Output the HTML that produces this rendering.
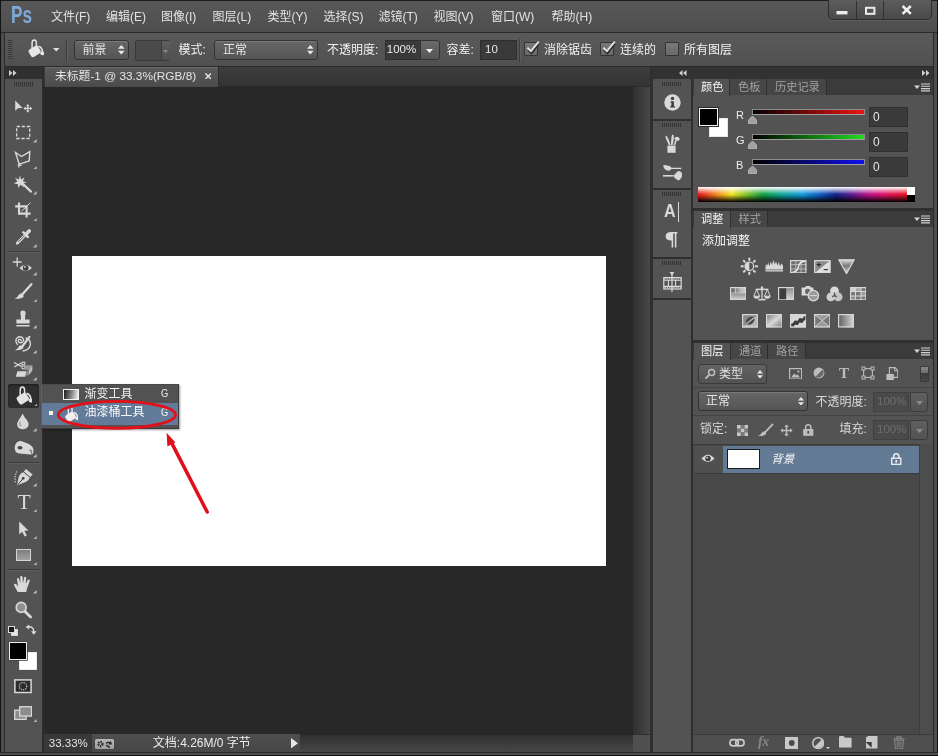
<!DOCTYPE html>
<html><head><meta charset="utf-8"><title>Photoshop</title>
<style>
html,body{margin:0;padding:0;background:#535353}
body{width:938px;height:756px;position:relative;overflow:hidden;font-family:"Liberation Sans","Noto Sans CJK SC",sans-serif}
#app{position:absolute;left:0;top:0;width:938px;height:756px;overflow:hidden;will-change:transform}
#app div,#app svg.ab{position:absolute}
.lb{white-space:nowrap;display:flex;align-items:center}
.lb span{display:inline-block}
</style></head><body><div id="app">
<div style="left:0px;top:0px;width:938px;height:756px;background:#535353"></div>
<div style="left:0px;top:0px;width:938px;height:32px;background:linear-gradient(#585858,#4e4e4e)"></div>
<div style="left:0px;top:0px;width:938px;height:1px;background:#1c1c1c"></div>
<div class="lb" style="left:11.2px;top:1.2px;height:28px;line-height:28px;font-size:23px;font-weight:bold;color:#7eaadc;letter-spacing:0px;transform:scaleX(0.745);transform-origin:0 0">Ps</div>
<div class="lb" style="left:51px;top:9.0px;height:16px;font-size:12px;line-height:16px;color:#e2e2e2;"><span>文件</span><span style="">(F)</span></div>
<div class="lb" style="left:106px;top:9.0px;height:16px;font-size:12px;line-height:16px;color:#e2e2e2;"><span>编辑</span><span style="">(E)</span></div>
<div class="lb" style="left:161px;top:9.0px;height:16px;font-size:12px;line-height:16px;color:#e2e2e2;"><span>图像</span><span style="">(I)</span></div>
<div class="lb" style="left:212.5px;top:9.0px;height:16px;font-size:12px;line-height:16px;color:#e2e2e2;"><span>图层</span><span style="">(L)</span></div>
<div class="lb" style="left:267.5px;top:9.0px;height:16px;font-size:12px;line-height:16px;color:#e2e2e2;"><span>类型</span><span style="">(Y)</span></div>
<div class="lb" style="left:323.5px;top:9.0px;height:16px;font-size:12px;line-height:16px;color:#e2e2e2;"><span>选择</span><span style="">(S)</span></div>
<div class="lb" style="left:378.5px;top:9.0px;height:16px;font-size:12px;line-height:16px;color:#e2e2e2;"><span>滤镜</span><span style="">(T)</span></div>
<div class="lb" style="left:433.5px;top:9.0px;height:16px;font-size:12px;line-height:16px;color:#e2e2e2;"><span>视图</span><span style="">(V)</span></div>
<div class="lb" style="left:491px;top:9.0px;height:16px;font-size:12px;line-height:16px;color:#e2e2e2;"><span>窗口</span><span style="">(W)</span></div>
<div class="lb" style="left:551.5px;top:9.0px;height:16px;font-size:12px;line-height:16px;color:#e2e2e2;"><span>帮助</span><span style="">(H)</span></div>
<div style="left:828px;top:0px;width:103.5px;height:19.5px;background:linear-gradient(#5c5c5c,#4a4a4a);border:1px solid #2e2e2e;border-top:none;border-radius:0 0 5px 5px;box-sizing:border-box;box-shadow:0 1px 0 #5e5e5e"></div>
<div style="left:856px;top:1px;width:1px;height:18px;background:#303030"></div>
<div style="left:883.2px;top:1px;width:1px;height:18px;background:#303030"></div>
<svg class="ab" style="left:828px;top:0px" width="104" height="20" viewBox="0 0 104 20" ><rect x="8.5" y="11" width="11" height="3.4" fill="#ececec"/><rect x="38" y="7.8" width="8.4" height="6" fill="none" stroke="#ececec" stroke-width="2"/><path d="M74.6 6L82.8 13.8M82.8 6L74.6 13.8" stroke="#f0f0f0" stroke-width="2.5"/></svg>
<div style="left:0px;top:32px;width:938px;height:1.2px;background:#2b2b2b"></div>
<div style="left:0px;top:33.2px;width:938px;height:33px;background:linear-gradient(#5a5a5a,#505050)"></div>
<div style="left:0px;top:66px;width:938px;height:1px;background:#2a2a2a"></div>
<svg class="ab" style="left:8px;top:40px" width="5" height="20" viewBox="0 0 5 20" ><rect x="0" y="0" width="4.5" height="1" fill="#3a3a3a"/><rect x="0" y="2" width="4.5" height="1" fill="#3a3a3a"/><rect x="0" y="4" width="4.5" height="1" fill="#3a3a3a"/><rect x="0" y="6" width="4.5" height="1" fill="#3a3a3a"/><rect x="0" y="8" width="4.5" height="1" fill="#3a3a3a"/><rect x="0" y="10" width="4.5" height="1" fill="#3a3a3a"/><rect x="0" y="12" width="4.5" height="1" fill="#3a3a3a"/><rect x="0" y="14" width="4.5" height="1" fill="#3a3a3a"/><rect x="0" y="16" width="4.5" height="1" fill="#3a3a3a"/><rect x="0" y="18" width="4.5" height="1" fill="#3a3a3a"/></svg><svg class="ab" style="left:26.3px;top:39px" width="17.64" height="19.6" viewBox="-1 0 18 20" ><g fill="#e6e6e6"><rect x="2.2" y="8.2" width="11.2" height="8.8" rx="2.2" transform="rotate(-33 7.8 12.6)"/><circle cx="15.6" cy="14.6" r="2"/></g><path d="M11.6 7.4Q15.4 8.4 15.8 13" fill="none" stroke="#e6e6e6" stroke-width="1.7"/><path d="M5.2 10.5V4.4Q5.2 1.1 7.4 1.1Q9.6 1.1 9.6 4.4V8.2" fill="none" stroke="#e6e6e6" stroke-width="1.5"/></svg><svg class="ab" style="left:53.25px;top:48.25px" width="6.5" height="3.5" viewBox="0 0 6.5 3.5" ><path d="M0 0H6.5L3.25 3.5Z" fill="#e0e0e0"/></svg><div style="left:66px;top:39px;width:1px;height:23px;background:#3c3c3c"></div><div style="left:67px;top:39px;width:1px;height:23px;background:#636363"></div>
<div style="left:74px;top:39.7px;width:55px;height:20px;background:linear-gradient(#666,#555);border:1px solid #333;border-radius:3px;box-sizing:border-box;box-shadow:inset 0 1px 0 #7a7a7a"></div><div class="lb" style="left:82.5px;top:41.7px;height:16px;font-size:12px;line-height:16px;color:#e6e6e6;"><span>前景</span></div><svg class="ab" style="left:118.475px;top:45.150000000000006px" width="6.6499999999999995" height="9.5" viewBox="0 0 7 10" ><path d="M0 4L3.5 0L7 4ZM0 6L3.5 10L7 6Z" fill="#e8e8e8"/></svg>
<div style="left:135px;top:40px;width:35px;height:21px;background:#4a4a4a;border:1px solid #3a3a3a;border-radius:2px;box-sizing:border-box"></div>
<div style="left:161px;top:41px;width:8px;height:19px;background:linear-gradient(#5e5e5e,#505050);border-left:1px solid #3c3c3c"></div>
<svg class="ab" style="left:163.0px;top:49.5px" width="5" height="3" viewBox="0 0 5 3" ><path d="M0 0H5L2.5 3Z" fill="#888"/></svg>
<div class="lb" style="left:178.5px;top:42.0px;height:16px;font-size:12px;line-height:16px;color:#f2f2f2;"><span>模式</span><span style="">:</span></div>
<div style="left:213.5px;top:39.7px;width:104px;height:20px;background:linear-gradient(#666,#555);border:1px solid #333;border-radius:3px;box-sizing:border-box;box-shadow:inset 0 1px 0 #7a7a7a"></div><div class="lb" style="left:223.0px;top:41.7px;height:16px;font-size:12px;line-height:16px;color:#e6e6e6;"><span>正常</span></div><svg class="ab" style="left:306.975px;top:45.150000000000006px" width="6.6499999999999995" height="9.5" viewBox="0 0 7 10" ><path d="M0 4L3.5 0L7 4ZM0 6L3.5 10L7 6Z" fill="#e8e8e8"/></svg>
<div class="lb" style="left:327px;top:42.0px;height:16px;font-size:12px;line-height:16px;color:#f2f2f2;"><span>不透明度</span><span style="">:</span></div>
<div style="left:385px;top:40px;width:36px;height:20px;background:#3a3a3a;border:1px solid #2e2e2e;box-sizing:border-box"></div>
<div class="lb" style="left:386.8px;top:42.25px;height:15.5px;font-size:11.5px;line-height:15.5px;color:#ececec;"><span style="">100%</span></div>
<div style="left:420px;top:40px;width:19.5px;height:20px;background:linear-gradient(#6a6a6a,#565656);border:1px solid #333;border-radius:0 3px 3px 0;box-sizing:border-box"></div>
<svg class="ab" style="left:426.3px;top:48.5px" width="7" height="4" viewBox="0 0 7 4" ><path d="M0 0H7L3.5 4Z" fill="#f0f0f0"/></svg>
<div class="lb" style="left:446.5px;top:42.0px;height:16px;font-size:12px;line-height:16px;color:#f2f2f2;"><span>容差</span><span style="">:</span></div>
<div style="left:480px;top:40px;width:37px;height:20px;background:#3a3a3a;border:1px solid #2e2e2e;box-sizing:border-box"></div>
<div class="lb" style="left:485px;top:42.25px;height:15.5px;font-size:11.5px;line-height:15.5px;color:#e6e6e6;"><span style="">10</span></div>
<div style="left:519.3px;top:39px;width:1px;height:23px;background:#3c3c3c"></div>
<div style="left:520.3px;top:39px;width:1px;height:23px;background:#5f5f5f"></div>
<div style="left:524px;top:41.9px;width:14px;height:14px;background:linear-gradient(#787878,#6a6a6a);border:1.2px solid #343434;box-sizing:border-box;border-radius:1px"></div><svg class="ab" style="left:524px;top:39.9px" width="17" height="17" viewBox="0 0 17 17" ><path d="M3.6 8.6L7.2 12.2L14.6 2.4" stroke="#2c2c2c" stroke-width="2" fill="none" transform="translate(.3 1.1)"/><path d="M3.4 7.8L6.9 11.2L14.8 1.6" stroke="#e2e2e2" stroke-width="1.9" fill="none"/></svg>
<div class="lb" style="left:544px;top:41.5px;height:16px;font-size:12px;line-height:16px;color:#f2f2f2;"><span>消除锯齿</span></div>
<div style="left:600px;top:41.9px;width:14px;height:14px;background:linear-gradient(#787878,#6a6a6a);border:1.2px solid #343434;box-sizing:border-box;border-radius:1px"></div><svg class="ab" style="left:600px;top:39.9px" width="17" height="17" viewBox="0 0 17 17" ><path d="M3.6 8.6L7.2 12.2L14.6 2.4" stroke="#2c2c2c" stroke-width="2" fill="none" transform="translate(.3 1.1)"/><path d="M3.4 7.8L6.9 11.2L14.8 1.6" stroke="#e2e2e2" stroke-width="1.9" fill="none"/></svg>
<div class="lb" style="left:620px;top:41.5px;height:16px;font-size:12px;line-height:16px;color:#f2f2f2;"><span>连续的</span></div>
<div style="left:664.8px;top:41.9px;width:14px;height:14px;background:linear-gradient(#787878,#6a6a6a);border:1.2px solid #343434;box-sizing:border-box;border-radius:1px"></div>
<div class="lb" style="left:684px;top:41.5px;height:16px;font-size:12px;line-height:16px;color:#f2f2f2;"><span>所有图层</span></div>
<div style="left:0px;top:33px;width:5px;height:723px;background:#4d4d4d"></div>
<div style="left:0px;top:0px;width:1px;height:756px;background:#141414"></div>
<div style="left:4.3px;top:33px;width:1px;height:719px;background:#2d2d2d"></div>
<div style="left:5px;top:67px;width:37px;height:12px;background:#303030"></div>
<div style="left:5.3px;top:79px;width:37px;height:673px;background:#535353"></div>
<div style="left:42px;top:67px;width:2px;height:686px;background:#2d2d2d"></div>
<svg class="ab" style="left:9px;top:70px" width="8" height="6" viewBox="0 0 8 6" ><path d="M0 0L3.5 3L0 6ZM4 0L7.5 3L4 6Z" fill="#d0d0d0"/></svg><svg class="ab" style="left:13.5px;top:82px" width="20" height="4.5" viewBox="0 0 20 4.5" ><rect x="0" y="0" width="1" height="4.5" fill="#333"/><rect x="2" y="0" width="1" height="4.5" fill="#333"/><rect x="4" y="0" width="1" height="4.5" fill="#333"/><rect x="6" y="0" width="1" height="4.5" fill="#333"/><rect x="8" y="0" width="1" height="4.5" fill="#333"/><rect x="10" y="0" width="1" height="4.5" fill="#333"/><rect x="12" y="0" width="1" height="4.5" fill="#333"/><rect x="14" y="0" width="1" height="4.5" fill="#333"/><rect x="16" y="0" width="1" height="4.5" fill="#333"/><rect x="18" y="0" width="1" height="4.5" fill="#333"/></svg><div style="left:8px;top:251px;width:31px;height:1px;background:#3c3c3c"></div><div style="left:8px;top:252px;width:31px;height:1px;background:#5e5e5e"></div><div style="left:8px;top:461.5px;width:31px;height:1px;background:#3c3c3c"></div><div style="left:8px;top:462.5px;width:31px;height:1px;background:#5e5e5e"></div><div style="left:8px;top:569px;width:31px;height:1px;background:#3c3c3c"></div><div style="left:8px;top:570px;width:31px;height:1px;background:#5e5e5e"></div><div style="left:8px;top:384px;width:31px;height:23.5px;background:#2f2f2f;border-radius:3px;box-shadow:inset 0 1px 2px #1c1c1c"></div><svg class="ab" style="left:12.0px;top:95.0px" width="22" height="22" viewBox="0 0 22 22" ><path d="M3.2 5.5L3.2 15.8L6 13.2L10.6 12.9Z" fill="#d9d9d9"/><path d="M15.8 9L17.6 11.2H16.4V12.8H18V11.6L20.2 13.4L18 15.2V14H16.4V15.6H17.6L15.8 17.8L14 15.6H15.2V14H13.6V15.2L11.4 13.4L13.6 11.6V12.8H15.2V11.2H14Z" fill="#d9d9d9"/></svg><svg class="ab" style="left:12.0px;top:121.0px" width="22" height="22" viewBox="0 0 22 22" ><rect x="4.7" y="5.5" width="13" height="12" fill="none" stroke="#d9d9d9" stroke-width="1.3" stroke-dasharray="3.2 1.8"/></svg><svg class="ab" style="left:33.4px;top:139.4px" width="3.6" height="3.6" viewBox="0 0 3.6 3.6" ><path d="M3.6 0V3.6H0Z" fill="#bcbcbc"/></svg><svg class="ab" style="left:12.0px;top:148.0px" width="22" height="22" viewBox="0 0 22 22" ><path d="M3.5 4.5L9.5 8.5L17.8 3.6L17.2 13L9 15.6L7.2 16.2Z" fill="none" stroke="#d9d9d9" stroke-width="1.4" stroke-linejoin="miter"/><path d="M8 15L6.5 19.5M5.6 16.8L9.6 17.4" stroke="#d9d9d9" stroke-width="1.2" fill="none"/></svg><svg class="ab" style="left:33.4px;top:165.9px" width="3.6" height="3.6" viewBox="0 0 3.6 3.6" ><path d="M3.6 0V3.6H0Z" fill="#bcbcbc"/></svg><svg class="ab" style="left:12.0px;top:173.0px" width="22" height="22" viewBox="0 0 22 22" ><path d="M7.9 2.5L9 6.6L12.6 4.6L10.8 8.3L14.6 9.3L10.8 10.6L12 14.2L8.6 11.8L6.2 15L6 11.2L1.8 10.6L5.4 8.4L3 5L6.8 6.4Z" fill="#d9d9d9"/><path d="M10.5 10.5L19 18.6" stroke="#d9d9d9" stroke-width="2.2" stroke-linecap="round"/></svg><svg class="ab" style="left:33.4px;top:191.4px" width="3.6" height="3.6" viewBox="0 0 3.6 3.6" ><path d="M3.6 0V3.6H0Z" fill="#bcbcbc"/></svg><svg class="ab" style="left:12.0px;top:199.0px" width="22" height="22" viewBox="0 0 22 22" ><path d="M7 3.5V14.6H18.6M3.2 7.4H14.6V18.6" fill="none" stroke="#d9d9d9" stroke-width="2.1"/><path d="M9.5 12.4L18.5 3.6" stroke="#d9d9d9" stroke-width="1"/></svg><svg class="ab" style="left:33.4px;top:217.9px" width="3.6" height="3.6" viewBox="0 0 3.6 3.6" ><path d="M3.6 0V3.6H0Z" fill="#bcbcbc"/></svg><svg class="ab" style="left:12.0px;top:226.0px" width="22" height="22" viewBox="0 0 22 22" ><path d="M5.2 17.2L13.6 8.8" stroke="#d9d9d9" stroke-width="2.8" stroke-linecap="round"/><path d="M6.2 16L12.8 9.4" stroke="#555" stroke-width=".9"/><path d="M11.4 6.4L15.8 10.8" stroke="#d9d9d9" stroke-width="2.6" stroke-linecap="round"/><path d="M14 8.2L17.2 5" stroke="#d9d9d9" stroke-width="3.6" stroke-linecap="round"/></svg><svg class="ab" style="left:33.4px;top:244.4px" width="3.6" height="3.6" viewBox="0 0 3.6 3.6" ><path d="M3.6 0V3.6H0Z" fill="#bcbcbc"/></svg><svg class="ab" style="left:12.0px;top:254.0px" width="22" height="22" viewBox="0 0 22 22" ><path d="M5.2 3.6V12.4M.8 8H9.6" stroke="#d9d9d9" stroke-width="1.3"/><path d="M7.4 14Q13.6 7.4 20 14Q13.6 20.2 7.4 14Z" fill="#d9d9d9"/><circle cx="13.7" cy="13.8" r="2.9" fill="#3e3e3e"/><circle cx="13" cy="13" r=".9" fill="#d9d9d9"/></svg><svg class="ab" style="left:33.4px;top:272.4px" width="3.6" height="3.6" viewBox="0 0 3.6 3.6" ><path d="M3.6 0V3.6H0Z" fill="#bcbcbc"/></svg><svg class="ab" style="left:12.0px;top:280.5px" width="22" height="22" viewBox="0 0 22 22" ><path d="M19.4 3.2L10.2 13.4" stroke="#d9d9d9" stroke-width="2.3" stroke-linecap="round"/><path d="M9.8 12.6Q11.8 13.6 11.6 15.8Q9.2 18.2 2.6 17.8Q5.8 16.4 6.6 14Q7.8 12 9.8 12.6Z" fill="#d9d9d9"/></svg><svg class="ab" style="left:33.4px;top:298.9px" width="3.6" height="3.6" viewBox="0 0 3.6 3.6" ><path d="M3.6 0V3.6H0Z" fill="#bcbcbc"/></svg><svg class="ab" style="left:12.0px;top:307.5px" width="22" height="22" viewBox="0 0 22 22" ><path d="M11 2.6Q14 2.6 13.6 5.6Q13 8 13 11.4H17.6V15.4H4.4V11.4H9Q9 8 8.4 5.6Q8 2.6 11 2.6Z" fill="#d9d9d9"/><rect x="4.4" y="17" width="13.2" height="1.5" fill="#d9d9d9"/></svg><svg class="ab" style="left:33.4px;top:325.4px" width="3.6" height="3.6" viewBox="0 0 3.6 3.6" ><path d="M3.6 0V3.6H0Z" fill="#bcbcbc"/></svg><svg class="ab" style="left:12.0px;top:332.5px" width="22" height="22" viewBox="0 0 22 22" ><path d="M9.4 8.4Q9.2 6.2 7.4 6.4Q5.6 7 6.4 8.8Q8 10.6 10.6 9Q12.8 6.6 10.2 4.4Q6.8 2.6 4.4 5.6Q3 9 5.6 11.8" fill="none" stroke="#d9d9d9" stroke-width="1.3"/><path d="M13.6 5Q18.8 6 18.4 12Q17 17.4 10.6 18" fill="none" stroke="#d9d9d9" stroke-width="1.3"/><path d="M17.4 3.8L10.6 13" stroke="#d9d9d9" stroke-width="2.2" stroke-linecap="round"/><path d="M10 12.4Q11.8 13.4 11.4 15.2Q8.8 17.8 2.8 17.2Q6 15.8 6.8 13.6Q8.2 11.8 10 12.4Z" fill="#d9d9d9"/></svg><svg class="ab" style="left:33.4px;top:350.4px" width="3.6" height="3.6" viewBox="0 0 3.6 3.6" ><path d="M3.6 0V3.6H0Z" fill="#bcbcbc"/></svg><svg class="ab" style="left:12.0px;top:358.5px" width="22" height="22" viewBox="0 0 22 22" ><path d="M2 3.4L9.4 7.6M2.4 8L9.2 4" stroke="#d9d9d9" stroke-width="1.2"/><rect x="10" y="3.2" width="2.8" height="2.6" fill="none" stroke="#d9d9d9" stroke-width="1"/><rect x="10" y="7" width="2.8" height="2.6" fill="none" stroke="#d9d9d9" stroke-width="1"/><path d="M14 6.2H20.4L17 10.8H10.6Z" fill="#9a9a9a"/><path d="M20.4 6.2V11.4L17 16V10.8Z" fill="#bdbdbd"/><path d="M5.4 12.2H14.6L13 17.8H3.8Z" fill="#d9d9d9"/><path d="M14.6 12.2L17 10.8V15.6L13 17.8Z" fill="#8a8a8a"/></svg><svg class="ab" style="left:33.4px;top:377.4px" width="3.6" height="3.6" viewBox="0 0 3.6 3.6" ><path d="M3.6 0V3.6H0Z" fill="#bcbcbc"/></svg><svg class="ab" style="left:14.2px;top:385.5px" width="18.0" height="20.0" viewBox="-1 0 18 20" ><g fill="#e4e4e4"><rect x="2.2" y="8.2" width="11.2" height="8.8" rx="2.2" transform="rotate(-33 7.8 12.6)"/><circle cx="15.6" cy="14.6" r="2"/></g><path d="M11.6 7.4Q15.4 8.4 15.8 13" fill="none" stroke="#e4e4e4" stroke-width="1.7"/><path d="M5.2 10.5V4.4Q5.2 1.1 7.4 1.1Q9.6 1.1 9.6 4.4V8.2" fill="none" stroke="#e4e4e4" stroke-width="1.5"/></svg><svg class="ab" style="left:33.9px;top:402.9px" width="3.6" height="3.6" viewBox="0 0 3.6 3.6" ><path d="M3.6 0V3.6H0Z" fill="#bcbcbc"/></svg><svg class="ab" style="left:12.0px;top:411.0px" width="22" height="22" viewBox="0 0 22 22" ><path d="M10.6 2.6Q12 6 15.2 9.6Q18 13.6 15.4 16.6Q13 18.8 9.8 18.2Q4.4 17 5.2 12.2Q6 9.4 8.4 6.4Q9.8 4.6 10.6 2.6Z" fill="#d9d9d9"/><path d="M8.2 10.6Q7 13.6 9 15.4" stroke="#9a9a9a" stroke-width="1.2" fill="none"/></svg><svg class="ab" style="left:33.4px;top:428.4px" width="3.6" height="3.6" viewBox="0 0 3.6 3.6" ><path d="M3.6 0V3.6H0Z" fill="#bcbcbc"/></svg><svg class="ab" style="left:12.0px;top:436.5px" width="22" height="22" viewBox="0 0 22 22" ><path d="M3.4 7.6Q5.2 3.4 9.8 4.2Q16.4 6 20.4 9.8Q21.8 11.6 21.4 15.4Q20.8 17.6 18.6 17.4L7.2 16.6Q3.2 16 2.8 12Q2.6 9.4 3.4 7.6Z" fill="#d9d9d9"/><ellipse cx="8" cy="10.8" rx="2.5" ry="1.7" fill="#444"/><path d="M17.6 12.6Q19.8 13.2 19.6 16.6" stroke="#777" stroke-width="1.2" fill="none"/></svg><svg class="ab" style="left:33.4px;top:454.4px" width="3.6" height="3.6" viewBox="0 0 3.6 3.6" ><path d="M3.6 0V3.6H0Z" fill="#bcbcbc"/></svg><svg class="ab" style="left:12.0px;top:465.5px" width="22" height="22" viewBox="0 0 22 22" ><path d="M14 3L20.6 8.4L18.4 11L11.8 5.6Z" fill="#d9d9d9"/><path d="M11.2 6.2L17.8 11.6Q16.4 15.4 12.2 16.4L5 19.6L6.6 11.6Q7.6 7.6 11.2 6.2Z" fill="#d9d9d9"/><path d="M5.6 19L10.8 12.8" stroke="#3a3a3a" stroke-width="1"/><circle cx="11.2" cy="12.2" r="1.3" fill="#3a3a3a"/><path d="M4.8 5.4Q2 11 3.6 17.6" fill="none" stroke="#d9d9d9" stroke-width="1.2" stroke-dasharray="1.2 1.3"/></svg><svg class="ab" style="left:33.4px;top:483.4px" width="3.6" height="3.6" viewBox="0 0 3.6 3.6" ><path d="M3.6 0V3.6H0Z" fill="#bcbcbc"/></svg><div style="left:15.5px;top:491px;width:16px;height:22px;font-family:'Liberation Serif',serif;font-size:20px;line-height:22px;color:#d9d9d9;text-align:center;transform:scaleX(1.08)">T</div><svg class="ab" style="left:33.4px;top:508.9px" width="3.6" height="3.6" viewBox="0 0 3.6 3.6" ><path d="M3.6 0V3.6H0Z" fill="#bcbcbc"/></svg><svg class="ab" style="left:12.0px;top:518.0px" width="22" height="22" viewBox="0 0 22 22" ><path d="M7.2 3.4L7.2 16.6L10.2 13.8L12.6 18.6L14.8 17.6L12.4 12.8L16.4 12.6Z" fill="#d9d9d9"/></svg><svg class="ab" style="left:33.4px;top:535.9px" width="3.6" height="3.6" viewBox="0 0 3.6 3.6" ><path d="M3.6 0V3.6H0Z" fill="#bcbcbc"/></svg><div style="left:16px;top:548.5px;width:14.5px;height:12.5px;box-sizing:border-box;border:1.3px solid #d4d4d4;background:linear-gradient(#7c7c7c,#a2a2a2)"></div><svg class="ab" style="left:33.4px;top:561.9px" width="3.6" height="3.6" viewBox="0 0 3.6 3.6" ><path d="M3.6 0V3.6H0Z" fill="#bcbcbc"/></svg><svg class="ab" style="left:12.0px;top:573.0px" width="22" height="22" viewBox="0 0 22 22" ><path d="M5.8 19L2.2 12.8Q1.4 11.2 2.6 10.8Q3.8 10.6 4.6 11.6L6.2 13.4L5 6.6Q4.8 5.2 5.8 5Q6.8 4.8 7.2 6.2L8.4 10.4L8.2 4.2Q8.2 3 9.4 3Q10.4 3 10.6 4.2L11 10.2L12.2 4.6Q12.4 3.6 13.4 3.8Q14.4 4 14.2 5.2L13.6 10.8L15.8 7Q16.4 6.2 17.2 6.6Q18 7 17.6 8.2L15.4 14.4Q14.6 17 14.2 19Z" fill="#d9d9d9"/></svg><svg class="ab" style="left:33.4px;top:590.4px" width="3.6" height="3.6" viewBox="0 0 3.6 3.6" ><path d="M3.6 0V3.6H0Z" fill="#bcbcbc"/></svg><svg class="ab" style="left:12.0px;top:598.0px" width="22" height="22" viewBox="0 0 22 22" ><circle cx="9.2" cy="9.4" r="5" fill="#8f8f8f" stroke="#d9d9d9" stroke-width="1.6"/><path d="M13 13.4L18.6 19" stroke="#d9d9d9" stroke-width="2.8" stroke-linecap="round"/></svg><div style="left:11px;top:629px;width:7px;height:7px;background:#e8e8e8;border:1px solid #cfcfcf;box-sizing:border-box"></div><div style="left:8px;top:626px;width:7px;height:6.5px;background:#1c1c1c;border:1px solid #d8d8d8;box-sizing:border-box"></div><svg class="ab" style="left:25px;top:624px" width="12" height="12" viewBox="0 0 12 12" ><path d="M3.6 2.8Q8.8 2.4 8.8 8" fill="none" stroke="#d9d9d9" stroke-width="1.4"/><path d="M0.6 3L4.2 0.4V5.6Z" fill="#d9d9d9"/><path d="M6 7.2H11.6L8.8 10.8Z" fill="#d9d9d9"/></svg><div style="left:18.5px;top:651.5px;width:18.5px;height:18.5px;background:#fff;border:1px solid #e9e9e9;box-sizing:border-box"></div><div style="left:8.5px;top:642px;width:18.8px;height:18.3px;background:#000;border:1.2px solid #eee;box-sizing:border-box;box-shadow:0 0 0 .8px #444"></div><svg class="ab" style="left:13.5px;top:679px" width="18" height="14.5" viewBox="0 0 18 14.5" ><rect x=".9" y=".9" width="16.2" height="12.6" fill="#2c2c2c" stroke="#d9d9d9" stroke-width="1.5"/><circle cx="9" cy="7.2" r="3.7" fill="none" stroke="#d9d9d9" stroke-width="1.2" stroke-dasharray="1.1 1.1"/></svg><svg class="ab" style="left:13.5px;top:705.5px" width="18.5" height="14.5" viewBox="0 0 18.5 14.5" ><rect x=".7" y="4.2" width="11.4" height="9.2" fill="#8c8c8c" stroke="#d9d9d9" stroke-width="1.3"/><rect x="5.7" y=".7" width="11.8" height="9.4" fill="#8c8c8c" stroke="#d9d9d9" stroke-width="1.3"/></svg><svg class="ab" style="left:33.4px;top:718.9px" width="3.6" height="3.6" viewBox="0 0 3.6 3.6" ><path d="M3.6 0V3.6H0Z" fill="#bcbcbc"/></svg>
<div style="left:44px;top:67px;width:606px;height:20px;background:linear-gradient(#3d3d3d,#333)"></div>
<div style="left:44px;top:86px;width:606px;height:1px;background:#2a2a2a"></div>
<div style="left:45px;top:67px;width:174px;height:20px;background:linear-gradient(#5c5c5c,#4b4b4b);border-right:1.5px solid #2a2a2a;box-sizing:border-box;box-shadow:inset 0 1px 0 #6a6a6a"></div>
<div class="lb" style="left:55px;top:68.6px;height:15.8px;font-size:11.8px;line-height:15.8px;color:#e4e4e4;"><span>未标题</span><span style="">-1 @ 33.3%(RGB/8)</span></div>
<svg class="ab" style="left:205.0px;top:73.0px" width="6.4" height="6.4" viewBox="0 0 6.4 6.4" ><path d="M.4 .4L6 6M6 .4L.4 6" stroke="#e6e6e6" stroke-width="1.4"/></svg>
<div style="left:44px;top:87px;width:588.5px;height:647px;background:#282828"></div>
<div style="left:632.5px;top:87px;width:17.5px;height:647px;background:linear-gradient(90deg,#303030,#484848)"></div>
<div style="left:72px;top:255.7px;width:534px;height:310.3px;background:#fff"></div>
<div style="left:44px;top:734px;width:606px;height:18px;background:linear-gradient(#2e2e2e,#474747)"></div>
<div style="left:44px;top:733.5px;width:589px;height:1px;background:#262626"></div>
<div style="left:44px;top:734px;width:48px;height:18px;background:#393939"></div>
<div style="left:92px;top:734px;width:208px;height:18px;background:linear-gradient(#4e4e4e,#474747)"></div>
<div style="left:633px;top:734.5px;width:17px;height:17.5px;background:#505050"></div>
<div class="lb" style="left:48.8px;top:735.55px;height:15.5px;font-size:11.5px;line-height:15.5px;color:#e4e4e4;"><span style="">33.33%</span></div>
<div style="left:95px;top:739px;width:19px;height:10px;background:linear-gradient(#b8b8b8,#a0a0a0);border-radius:1.5px;box-sizing:border-box"></div><svg class="ab" style="left:95px;top:739px" width="19" height="10" viewBox="0 0 19 10" ><circle cx="5.4" cy="5" r="2.1" fill="none" stroke="#2a2a2a" stroke-width="2.2" stroke-dasharray="1.3 0.9"/><path d="M10.6 4.4Q12 1.6 15 3.2L15.8 1.6L17 5.6L13 5.4L14.2 4.4Q12.6 3.4 11.8 5Z" fill="#2a2a2a"/><path d="M11.2 6.2L14.8 8.6" stroke="#2a2a2a" stroke-width="1.6"/></svg><svg class="ab" style="left:290.8px;top:738px" width="7" height="10.4" viewBox="0 0 7 10.4" ><path d="M0 0L7 5.2L0 10.4Z" fill="#e6e6e6"/></svg>
<div class="lb" style="left:152.8px;top:735.3px;height:16px;font-size:12px;line-height:16px;color:#ececec;"><span>文档</span><span style="">:4.26M/0&nbsp;</span><span>字节</span></div>
<div style="left:650px;top:67px;width:288px;height:12px;background:#323232"></div>
<div style="left:650px;top:67px;width:3px;height:686px;background:#2f2f2f"></div>
<div style="left:653px;top:79px;width:37.5px;height:674px;background:#535353"></div>
<div style="left:690.5px;top:79px;width:2.5px;height:674px;background:#2f2f2f"></div>
<svg class="ab" style="left:679px;top:69.7px" width="8" height="6" viewBox="0 0 8 6" ><path d="M3.5 0L0 3L3.5 6ZM7.5 0L4 3L7.5 6Z" fill="#cfcfcf"/></svg><svg class="ab" style="left:921.5px;top:69.7px" width="8" height="6" viewBox="0 0 8 6" ><path d="M0 0L3.5 3L0 6ZM4 0L7.5 3L4 6Z" fill="#cfcfcf"/></svg><svg class="ab" style="left:661.5px;top:82px" width="20" height="4" viewBox="0 0 20 4" ><rect x="0" y="0" width="1" height="4" fill="#333"/><rect x="2" y="0" width="1" height="4" fill="#333"/><rect x="4" y="0" width="1" height="4" fill="#333"/><rect x="6" y="0" width="1" height="4" fill="#333"/><rect x="8" y="0" width="1" height="4" fill="#333"/><rect x="10" y="0" width="1" height="4" fill="#333"/><rect x="12" y="0" width="1" height="4" fill="#333"/><rect x="14" y="0" width="1" height="4" fill="#333"/><rect x="16" y="0" width="1" height="4" fill="#333"/><rect x="18" y="0" width="1" height="4" fill="#333"/></svg><svg class="ab" style="left:661.5px;top:123px" width="20" height="4" viewBox="0 0 20 4" ><rect x="0" y="0" width="1" height="4" fill="#333"/><rect x="2" y="0" width="1" height="4" fill="#333"/><rect x="4" y="0" width="1" height="4" fill="#333"/><rect x="6" y="0" width="1" height="4" fill="#333"/><rect x="8" y="0" width="1" height="4" fill="#333"/><rect x="10" y="0" width="1" height="4" fill="#333"/><rect x="12" y="0" width="1" height="4" fill="#333"/><rect x="14" y="0" width="1" height="4" fill="#333"/><rect x="16" y="0" width="1" height="4" fill="#333"/><rect x="18" y="0" width="1" height="4" fill="#333"/></svg><svg class="ab" style="left:661.5px;top:192px" width="20" height="4" viewBox="0 0 20 4" ><rect x="0" y="0" width="1" height="4" fill="#333"/><rect x="2" y="0" width="1" height="4" fill="#333"/><rect x="4" y="0" width="1" height="4" fill="#333"/><rect x="6" y="0" width="1" height="4" fill="#333"/><rect x="8" y="0" width="1" height="4" fill="#333"/><rect x="10" y="0" width="1" height="4" fill="#333"/><rect x="12" y="0" width="1" height="4" fill="#333"/><rect x="14" y="0" width="1" height="4" fill="#333"/><rect x="16" y="0" width="1" height="4" fill="#333"/><rect x="18" y="0" width="1" height="4" fill="#333"/></svg><svg class="ab" style="left:661.5px;top:260.5px" width="20" height="4" viewBox="0 0 20 4" ><rect x="0" y="0" width="1" height="4" fill="#333"/><rect x="2" y="0" width="1" height="4" fill="#333"/><rect x="4" y="0" width="1" height="4" fill="#333"/><rect x="6" y="0" width="1" height="4" fill="#333"/><rect x="8" y="0" width="1" height="4" fill="#333"/><rect x="10" y="0" width="1" height="4" fill="#333"/><rect x="12" y="0" width="1" height="4" fill="#333"/><rect x="14" y="0" width="1" height="4" fill="#333"/><rect x="16" y="0" width="1" height="4" fill="#333"/><rect x="18" y="0" width="1" height="4" fill="#333"/></svg><div style="left:653px;top:118.5px;width:37.5px;height:2px;background:#2f2f2f"></div><div style="left:653px;top:188px;width:37.5px;height:2px;background:#2f2f2f"></div><div style="left:653px;top:256.5px;width:37.5px;height:2px;background:#2f2f2f"></div><div style="left:653px;top:298px;width:37.5px;height:2px;background:#2f2f2f"></div><svg class="ab" style="left:664px;top:94.2px" width="17" height="17" viewBox="0 0 17 17" ><circle cx="8.5" cy="8.5" r="8.2" fill="#d9d9d9"/><circle cx="8.5" cy="4.4" r="1.7" fill="#3c3c3c"/><path d="M6.6 7.2H9.9V12H10.8V13.4H6.4V12H7.3V8.6H6.6Z" fill="#3c3c3c"/></svg><svg class="ab" style="left:663px;top:133px" width="18" height="21" viewBox="0 0 18 21" ><path d="M4.4 12.5H12.6V19.8H4.4Z" fill="#d9d9d9"/><path d="M5.8 12L2.6 4.8Q2.2 2 3.8 3.2Q6.4 6.4 7.4 12Z" fill="#d9d9d9"/><path d="M7.8 12L8.6 3.2Q9.2 .4 10.6 2.4Q11.2 5.6 9.6 12Z" fill="#d9d9d9"/><path d="M10.6 12L12.4 6.4L14 7L12.2 12Z" fill="#d9d9d9"/><path d="M11 5.6Q13.6 2.2 16.6 5.2Q16.8 7.8 14.6 7.8Q12.4 7.2 11 5.6Z" fill="#d9d9d9"/></svg><svg class="ab" style="left:662px;top:162px" width="21" height="19" viewBox="0 0 21 19" ><path d="M1 3.4Q3.4 2.4 5.6 3.8Q8.6 3.6 9.4 5.8H19.4V7H9.4Q8.4 9 5.6 8.6Q2.4 8 1 3.4Z" fill="#d9d9d9"/><path d="M1 13H11.4V14.6H1Z" fill="#d9d9d9"/><path d="M11.4 13.8L15.4 9.4Q18.8 8.2 20 11.6Q20.4 16 17 18.4Q14.4 18 12.6 15.8Z" fill="#d9d9d9"/></svg><div style="left:664px;top:201px;width:14px;height:20px;font-size:17.5px;line-height:20px;color:#d9d9d9;font-weight:bold;transform:scaleX(.92);transform-origin:0 0">A</div><div style="left:677.8px;top:202px;width:1.2px;height:20px;background:#d9d9d9"></div><svg class="ab" style="left:665px;top:232px" width="13" height="16" viewBox="0 0 13 16" ><path d="M6.4 0H12.4V1.6H11.4V15.6H9.8V1.6H8.2V15.6H6.6V8.6Q.6 8.6 .6 4.2Q.8 0 6.4 0Z" fill="#d9d9d9"/></svg><svg class="ab" style="left:663px;top:270.5px" width="19" height="22" viewBox="0 0 19 22" ><path d="M6.6 1H11.4L9 4.4Z" fill="#d9d9d9"/><path d="M9 3V21" stroke="#d9d9d9" stroke-width="1.2"/><rect x=".8" y="6.6" width="17.4" height="11.4" fill="none" stroke="#d9d9d9" stroke-width="1.2"/><path d="M.8 9.2H18.2M.8 15.4H18.2M5.4 9.2V15.4M12.6 9.2V15.4" stroke="#d9d9d9" stroke-width="1.1"/><path d="M1.6 7.9H17.6M1.6 16.7H17.6" stroke="#d9d9d9" stroke-width="1.2" stroke-dasharray="1.1 1.1"/></svg>
<div style="left:693px;top:79px;width:240.2px;height:674px;background:#535353"></div>
<div style="left:933.2px;top:33px;width:5px;height:723px;background:#4d4d4d"></div>
<div style="left:933.2px;top:33px;width:1.2px;height:719px;background:#2a2a2a"></div>
<div style="left:937.2px;top:0px;width:1px;height:756px;background:#141414"></div>
<div style="left:693px;top:79px;width:240.2px;height:16.3px;background:#3b3b3b"></div><div style="left:694px;top:79px;width:36px;height:17.3px;background:#535353;border-right:1px solid #2f2f2f;box-sizing:border-box"></div><div class="lb" style="left:701px;top:80.05000000000001px;height:15.2px;font-size:11.2px;line-height:15.2px;color:#f4f4f4;"><span>颜色</span></div><div style="left:730px;top:79px;width:37px;height:16.3px;background:#464646;border-right:1px solid #2f2f2f;box-sizing:border-box"></div><div class="lb" style="left:738px;top:80.05000000000001px;height:15.2px;font-size:11.2px;line-height:15.2px;color:#a2a2a2;"><span>色板</span></div><div style="left:767px;top:79px;width:60px;height:16.3px;background:#464646;border-right:1px solid #2f2f2f;box-sizing:border-box"></div><div class="lb" style="left:775px;top:80.05000000000001px;height:15.2px;font-size:11.2px;line-height:15.2px;color:#a2a2a2;"><span>历史记录</span></div><svg class="ab" style="left:913.5px;top:82.65px" width="17" height="9" viewBox="0 0 17 9" ><path d="M0 2.6H6L3 6Z" fill="#d4d4d4"/><path d="M7 1H16M7 3.3H16M7 5.6H16M7 7.9H16" stroke="#d4d4d4" stroke-width="1.1"/></svg>
<div style="left:708.5px;top:117.5px;width:19px;height:19px;background:#fff;box-sizing:border-box;border:1px solid #e6e6e6"></div><div style="left:697.5px;top:106.5px;width:21px;height:20.5px;background:#000;box-sizing:border-box;border:1px solid #2a2a2a"></div><div style="left:698.5px;top:107.5px;width:19px;height:18.5px;background:#000;box-sizing:border-box;border:1.2px solid #f4f4f4"></div><div style="left:751.5px;top:109px;width:113px;height:6px;box-sizing:border-box;border:1px solid #8c8c8c;border-bottom-color:#a0a0a0;background:linear-gradient(90deg,#000,#ee1414)"></div><svg class="ab" style="left:748.0px;top:116.2px" width="9" height="8" viewBox="0 0 9 8" ><path d="M4.5 0L8.6 4V7.6H.4V4Z" fill="#a0a0a0" stroke="#cfcfcf" stroke-width=".7"/></svg><div style="left:751.5px;top:134.2px;width:113px;height:6px;box-sizing:border-box;border:1px solid #8c8c8c;border-bottom-color:#a0a0a0;background:linear-gradient(90deg,#000,#22dc22)"></div><svg class="ab" style="left:748.0px;top:141.39999999999998px" width="9" height="8" viewBox="0 0 9 8" ><path d="M4.5 0L8.6 4V7.6H.4V4Z" fill="#a0a0a0" stroke="#cfcfcf" stroke-width=".7"/></svg><div style="left:751.5px;top:159px;width:113px;height:6px;box-sizing:border-box;border:1px solid #8c8c8c;border-bottom-color:#a0a0a0;background:linear-gradient(90deg,#000,#1010ee)"></div><svg class="ab" style="left:748.0px;top:166.2px" width="9" height="8" viewBox="0 0 9 8" ><path d="M4.5 0L8.6 4V7.6H.4V4Z" fill="#a0a0a0" stroke="#cfcfcf" stroke-width=".7"/></svg><div style="left:698px;top:187px;width:209px;height:15px;background:linear-gradient(rgba(255,255,255,1) 0%,rgba(255,255,255,0) 48%,rgba(0,0,0,0) 52%,rgba(0,0,0,1) 100%),linear-gradient(90deg,#e8141c 0%,#f07c20 8%,#f4e420 16%,#84c42c 23%,#10a044 31%,#10a49c 41%,#1498dc 50%,#1060c4 58%,#14228c 66%,#641a94 74%,#c01488 82%,#e01464 90%,#e41420 100%)"></div><div style="left:907px;top:187px;width:8px;height:7.5px;background:#fff"></div><div style="left:907px;top:194.5px;width:8px;height:7.5px;background:#000"></div>
<div class="lb" style="left:736px;top:108.1px;height:15px;font-size:11px;line-height:15px;color:#ececec;"><span style="">R</span></div>
<div class="lb" style="left:736px;top:133.1px;height:15px;font-size:11px;line-height:15px;color:#ececec;"><span style="">G</span></div>
<div class="lb" style="left:736px;top:157.6px;height:15px;font-size:11px;line-height:15px;color:#ececec;"><span style="">B</span></div>
<div style="left:869px;top:107px;width:39px;height:19.5px;background:#3a3a3a;border:1px solid #303030;box-sizing:border-box"></div>
<div class="lb" style="left:873px;top:109.0px;height:16px;font-size:12px;line-height:16px;color:#e6e6e6;"><span style="">0</span></div>
<div style="left:869px;top:132px;width:39px;height:19.5px;background:#3a3a3a;border:1px solid #303030;box-sizing:border-box"></div>
<div class="lb" style="left:873px;top:134.0px;height:16px;font-size:12px;line-height:16px;color:#e6e6e6;"><span style="">0</span></div>
<div style="left:869px;top:157px;width:39px;height:19.5px;background:#3a3a3a;border:1px solid #303030;box-sizing:border-box"></div>
<div class="lb" style="left:873px;top:159.0px;height:16px;font-size:12px;line-height:16px;color:#e6e6e6;"><span style="">0</span></div>
<div style="left:693px;top:207.7px;width:240.2px;height:3.3px;background:#2f2f2f"></div>
<div style="left:693px;top:211px;width:240.2px;height:16px;background:#3b3b3b"></div><div style="left:694px;top:211px;width:36.5px;height:17px;background:#535353;border-right:1px solid #2f2f2f;box-sizing:border-box"></div><div class="lb" style="left:701px;top:211.9px;height:15.2px;font-size:11.2px;line-height:15.2px;color:#f4f4f4;"><span>调整</span></div><div style="left:730.5px;top:211px;width:37.5px;height:16px;background:#464646;border-right:1px solid #2f2f2f;box-sizing:border-box"></div><div class="lb" style="left:738.5px;top:211.9px;height:15.2px;font-size:11.2px;line-height:15.2px;color:#a2a2a2;"><span>样式</span></div><svg class="ab" style="left:913.5px;top:214.5px" width="17" height="9" viewBox="0 0 17 9" ><path d="M0 2.6H6L3 6Z" fill="#d4d4d4"/><path d="M7 1H16M7 3.3H16M7 5.6H16M7 7.9H16" stroke="#d4d4d4" stroke-width="1.1"/></svg>
<div class="lb" style="left:702px;top:233.2px;height:16px;font-size:12px;line-height:16px;color:#f6f6f6;"><span>添加调整</span></div>
<svg class="ab" width="0" height="0" style="left:0;top:0"><defs><linearGradient id="gv" x1="0" y1="0" x2="0" y2="1"><stop offset="0" stop-color="#8a8a8a"/><stop offset="1" stop-color="#dcdcdc"/></linearGradient><linearGradient id="gh" x1="0" y1="0" x2="1" y2="0"><stop offset="0" stop-color="#5a5a5a"/><stop offset="1" stop-color="#dedede"/></linearGradient><linearGradient id="gd" x1="0" y1="0" x2="1" y2="1"><stop offset="0" stop-color="#6c6c6c"/><stop offset=".5" stop-color="#d8d8d8"/><stop offset="1" stop-color="#777"/></linearGradient><linearGradient id="gt" x1="0" y1="0" x2="0" y2="1"><stop offset="0" stop-color="#d8d8d8"/><stop offset=".45" stop-color="#777"/><stop offset="1" stop-color="#e0e0e0"/></linearGradient></defs></svg><svg class="ab" style="left:740px;top:257.2px" width="18.6" height="18.6" viewBox="0 0 18.6 18.6" ><g transform="translate(9.3 9.3)"><rect x="-1" y="-8.6" width="2" height="3" fill="#d9d9d9" transform="rotate(0)"/><rect x="-1" y="-8.6" width="2" height="3" fill="#d9d9d9" transform="rotate(45)"/><rect x="-1" y="-8.6" width="2" height="3" fill="#d9d9d9" transform="rotate(90)"/><rect x="-1" y="-8.6" width="2" height="3" fill="#d9d9d9" transform="rotate(135)"/><rect x="-1" y="-8.6" width="2" height="3" fill="#d9d9d9" transform="rotate(180)"/><rect x="-1" y="-8.6" width="2" height="3" fill="#d9d9d9" transform="rotate(225)"/><rect x="-1" y="-8.6" width="2" height="3" fill="#d9d9d9" transform="rotate(270)"/><rect x="-1" y="-8.6" width="2" height="3" fill="#d9d9d9" transform="rotate(315)"/><circle r="4.3" fill="none" stroke="#d9d9d9" stroke-width="1.2"/><path d="M0 -4.3A4.3 4.3 0 0 0 0 4.3Z" fill="#d9d9d9"/></g></svg><svg class="ab" style="left:764.5px;top:259.5px" width="18.5" height="12" viewBox="0 0 18.5 12" ><path d="M.5 11.6V5.4L1.8 4V7L3.2 2.4L4.4 6.2L5.8 1.4L7 5L8.4 0L9.8 4.6L11 1.2L12.4 5.6L13.8 2L15 6.4L16.4 3.4L18 5.4V11.6Z" fill="#d9d9d9"/><path d="M.5 9.8H18" stroke="#6a6a6a" stroke-width=".8"/></svg><svg class="ab" style="left:790px;top:259.6px" width="16.5" height="13.5" viewBox="0 0 16.5 13.5" ><rect width="16.5" height="13.5" fill="#6e6e6e"/><path d="M5.8 0V13.5M11 0V13.5M0 4.6H16.5M0 9H16.5" stroke="#bdbdbd" stroke-width=".9"/><path d="M1 12.6Q7.4 12 8.4 6.8Q9.4 1.4 15.6 1" fill="none" stroke="#f0f0f0" stroke-width="1.3"/><rect x=".6" y=".6" width="15.3" height="12.3" fill="none" stroke="#d6d6d6" stroke-width="1.2"/></svg><svg class="ab" style="left:814px;top:259.6px" width="16.5" height="13.5" viewBox="0 0 16.5 13.5" ><path d="M0 0H16.5L0 13.5Z" fill="#8c8c8c"/><path d="M16.5 0V13.5H0Z" fill="#e0e0e0"/><path d="M2.6 4.6H7M4.8 2.4V6.8" stroke="#2c2c2c" stroke-width="1.1"/><path d="M9.6 9.6H14" stroke="#2c2c2c" stroke-width="1.1"/><rect x=".6" y=".6" width="15.3" height="12.3" fill="none" stroke="#d6d6d6" stroke-width="1.2"/></svg><svg class="ab" style="left:837.5px;top:258.8px" width="17" height="15.5" viewBox="0 0 17 15.5" ><path d="M.8 .8H16.2L8.5 14.6Z" fill="url(#gt)" stroke="#d9d9d9" stroke-width="1.2"/></svg><svg class="ab" style="left:729.8px;top:286.8px" width="16.5" height="13.5" viewBox="0 0 16.5 13.5" ><rect width="16.5" height="6" fill="url(#gh)"/><rect y="6" width="16.5" height="7.5" fill="url(#gv)"/><path d="M0 6H16.5M5.5 0V6M11 0V6" stroke="#cfcfcf" stroke-width=".8"/><rect x=".6" y=".6" width="15.3" height="12.3" fill="none" stroke="#d6d6d6" stroke-width="1.2"/></svg><svg class="ab" style="left:753px;top:286.0px" width="18" height="15" viewBox="0 0 18 15" ><path d="M9 .6V3" stroke="#d9d9d9" stroke-width="2.2"/><path d="M2.6 3.4H15.4" stroke="#d9d9d9" stroke-width="1.5"/><path d="M9 3V12.4" stroke="#d9d9d9" stroke-width="1.3"/><path d="M5.4 13.6H12.6" stroke="#d9d9d9" stroke-width="1.6"/><path d="M3.6 3.6L.8 10.2H6.6ZM14.4 3.6L11.4 10.2H17.2Z" fill="none" stroke="#d9d9d9" stroke-width="1"/><path d="M.4 10.2H7Q6.4 12.8 3.7 12.8Q1 12.8 .4 10.2ZM11 10.2H17.6Q17 12.8 14.3 12.8Q11.6 12.8 11 10.2Z" fill="#d9d9d9"/></svg><svg class="ab" style="left:777.8px;top:286.8px" width="16.5" height="13.5" viewBox="0 0 16.5 13.5" ><rect width="8.2" height="13.5" fill="#3e3e3e"/><rect x="8.2" width="8.3" height="13.5" fill="url(#gv)"/><rect x=".6" y=".6" width="15.3" height="12.3" fill="none" stroke="#d6d6d6" stroke-width="1.2"/></svg><svg class="ab" style="left:801px;top:285.40000000000003px" width="19" height="17" viewBox="0 0 19 17" ><path d="M.6 2.6H4L5 1H9L10 2.6H12.4V10.4H.6Z" fill="#d9d9d9"/><circle cx="6.6" cy="6.4" r="2.6" fill="#666"/><circle cx="12.4" cy="10.6" r="5.2" fill="#9a9a9a" stroke="#d9d9d9" stroke-width="1.3"/><path d="M8.6 10.6H16.2" stroke="#d9d9d9" stroke-width="1"/></svg><svg class="ab" style="left:825.5px;top:285.6px" width="17" height="16" viewBox="0 0 17 16" ><circle cx="8.5" cy="4.9" r="4.4" fill="#d9d9d9"/><circle cx="4.9" cy="10.9" r="4.4" fill="#cfcfcf"/><circle cx="12.1" cy="10.9" r="4.4" fill="#c4c4c4"/><path d="M8.5 6.4V9.2L6.2 11M8.5 9.2L10.8 11" stroke="#555" stroke-width="1.4" fill="none"/></svg><svg class="ab" style="left:849.8px;top:286.8px" width="16.5" height="13.5" viewBox="0 0 16.5 13.5" ><rect width="16.5" height="13.5" fill="#777"/><rect width="5.5" height="4.5" fill="#d0d0d0"/><rect x="5.5" width="5.5" height="4.5" fill="#a8a8a8"/><rect x="11" y="4.5" width="5.5" height="4.5" fill="#9c9c9c"/><rect y="9" width="5.5" height="4.5" fill="#8e8e8e"/><path d="M5.5 0V13.5M11 0V13.5M0 4.5H16.5M0 9H16.5" stroke="#d6d6d6" stroke-width="1"/><rect x=".6" y=".6" width="15.3" height="12.3" fill="none" stroke="#d6d6d6" stroke-width="1.2"/></svg><svg class="ab" style="left:741.8px;top:314px" width="16.5" height="13.5" viewBox="0 0 16.5 13.5" ><rect width="16.5" height="13.5" fill="#8a8a8a"/><path d="M0 13.5L16.5 0V13.5Z" fill="#b8b8b8"/><ellipse cx="8.2" cy="6.8" rx="4.8" ry="3.4" transform="rotate(-38 8.2 6.8)" fill="#4a4a4a"/><path d="M4.6 9.6L11.8 4" stroke="#c8c8c8" stroke-width="1.2"/><rect x=".6" y=".6" width="15.3" height="12.3" fill="none" stroke="#d6d6d6" stroke-width="1.2"/></svg><svg class="ab" style="left:765.8px;top:314px" width="16.5" height="13.5" viewBox="0 0 16.5 13.5" ><rect width="16.5" height="13.5" fill="url(#gd)"/><rect x=".6" y=".6" width="15.3" height="12.3" fill="none" stroke="#d6d6d6" stroke-width="1.2"/></svg><svg class="ab" style="left:789.8px;top:314px" width="16.5" height="13.5" viewBox="0 0 16.5 13.5" ><rect width="16.5" height="13.5" fill="#d8d8d8"/><path d="M0 10L3 9L4.6 6.4L7.8 6.8L9.4 4L12.6 4.4L14 2.2L16.5 2V6L14 6.6L12.4 9L9.4 8.6L8 11L4.8 10.8L3.4 13H0Z" fill="#3c3c3c"/><rect x=".6" y=".6" width="15.3" height="12.3" fill="none" stroke="#d6d6d6" stroke-width="1.2"/></svg><svg class="ab" style="left:813.8px;top:314px" width="16.5" height="13.5" viewBox="0 0 16.5 13.5" ><rect width="16.5" height="13.5" fill="#9a9a9a"/><path d="M0 0L8.25 6.75L0 13.5Z" fill="#777"/><path d="M16.5 0L8.25 6.75L16.5 13.5Z" fill="#777"/><path d="M0 0L16.5 13.5M16.5 0L0 13.5" stroke="#d0d0d0" stroke-width=".9"/><rect x=".6" y=".6" width="15.3" height="12.3" fill="none" stroke="#d6d6d6" stroke-width="1.2"/></svg><svg class="ab" style="left:837.8px;top:314px" width="16.5" height="13.5" viewBox="0 0 16.5 13.5" ><rect width="16.5" height="13.5" fill="url(#gh)"/><rect x=".6" y=".6" width="15.3" height="12.3" fill="none" stroke="#d6d6d6" stroke-width="1.2"/></svg>
<div style="left:693px;top:339.5px;width:240.2px;height:4px;background:#2f2f2f"></div>
<div style="left:693px;top:343px;width:240.2px;height:16.3px;background:#3b3b3b"></div><div style="left:694px;top:343px;width:37px;height:17.3px;background:#535353;border-right:1px solid #2f2f2f;box-sizing:border-box"></div><div class="lb" style="left:701px;top:344.04999999999995px;height:15.2px;font-size:11.2px;line-height:15.2px;color:#f4f4f4;"><span>图层</span></div><div style="left:731px;top:343px;width:37px;height:16.3px;background:#464646;border-right:1px solid #2f2f2f;box-sizing:border-box"></div><div class="lb" style="left:739px;top:344.04999999999995px;height:15.2px;font-size:11.2px;line-height:15.2px;color:#a2a2a2;"><span>通道</span></div><div style="left:768px;top:343px;width:38px;height:16.3px;background:#464646;border-right:1px solid #2f2f2f;box-sizing:border-box"></div><div class="lb" style="left:776px;top:344.04999999999995px;height:15.2px;font-size:11.2px;line-height:15.2px;color:#a2a2a2;"><span>路径</span></div><svg class="ab" style="left:913.5px;top:346.65px" width="17" height="9" viewBox="0 0 17 9" ><path d="M0 2.6H6L3 6Z" fill="#d4d4d4"/><path d="M7 1H16M7 3.3H16M7 5.6H16M7 7.9H16" stroke="#d4d4d4" stroke-width="1.1"/></svg>
<div style="left:698px;top:364px;width:69px;height:20px;background:linear-gradient(#626262,#535353);border:1px solid #3a3a3a;border-radius:3px;box-sizing:border-box"></div>
<div class="lb" style="left:719px;top:366.0px;height:16px;font-size:12px;line-height:16px;color:#e0e0e0;"><span>类型</span></div>
<svg class="ab" style="left:757.29px;top:369.5px" width="6.02" height="8.6" viewBox="0 0 7 10" ><path d="M0 4L3.5 0L7 4ZM0 6L3.5 10L7 6Z" fill="#e8e8e8"/></svg>
<div style="left:693px;top:387px;width:240.2px;height:1px;background:#444"></div>
<div style="left:698px;top:391px;width:110px;height:20px;background:linear-gradient(#666,#555);border:1px solid #333;border-radius:3px;box-sizing:border-box;box-shadow:inset 0 1px 0 #7a7a7a"></div><div class="lb" style="left:706px;top:393.0px;height:16px;font-size:12px;line-height:16px;color:#e6e6e6;"><span>正常</span></div><svg class="ab" style="left:797.79px;top:396.9px" width="6.02" height="8.6" viewBox="0 0 7 10" ><path d="M0 4L3.5 0L7 4ZM0 6L3.5 10L7 6Z" fill="#e8e8e8"/></svg>
<div class="lb" style="left:815.5px;top:393.5px;height:16px;font-size:12px;line-height:16px;color:#d8d8d8;"><span>不透明度</span><span style="">:</span></div>
<div style="left:873px;top:392px;width:36px;height:20px;background:#4a4a4a;border:1px solid #404040;box-sizing:border-box"></div>
<div class="lb" style="left:877px;top:394.25px;height:15.5px;font-size:11.5px;line-height:15.5px;color:#6e6e6e;"><span style="">100%</span></div>
<div style="left:910px;top:392px;width:18px;height:20px;background:linear-gradient(#606060,#525252);border:1px solid #3c3c3c;border-radius:0 3px 3px 0;box-sizing:border-box"></div>
<svg class="ab" style="left:915.5px;top:400.5px" width="7" height="4" viewBox="0 0 7 4" ><path d="M0 0H7L3.5 4Z" fill="#8a8a8a"/></svg>
<div style="left:693px;top:415px;width:240.2px;height:1px;background:#444"></div>
<div class="lb" style="left:700px;top:420.8px;height:16px;font-size:12px;line-height:16px;color:#d8d8d8;"><span>锁定</span><span style="">:</span></div>
<div class="lb" style="left:839.5px;top:420.8px;height:16px;font-size:12px;line-height:16px;color:#d8d8d8;"><span>填充</span><span style="">:</span></div>
<div style="left:873px;top:420px;width:36px;height:20px;background:#4a4a4a;border:1px solid #404040;box-sizing:border-box"></div>
<div class="lb" style="left:877px;top:422.25px;height:15.5px;font-size:11.5px;line-height:15.5px;color:#6e6e6e;"><span style="">100%</span></div>
<div style="left:910px;top:420px;width:18px;height:20px;background:linear-gradient(#606060,#525252);border:1px solid #3c3c3c;border-radius:0 3px 3px 0;box-sizing:border-box"></div>
<svg class="ab" style="left:915.5px;top:428.5px" width="7" height="4" viewBox="0 0 7 4" ><path d="M0 0H7L3.5 4Z" fill="#8a8a8a"/></svg>
<div style="left:693px;top:444px;width:226px;height:290px;background:#484848"></div>
<div style="left:693px;top:444px;width:226px;height:1px;background:#3a3a3a"></div>
<div style="left:918.5px;top:444px;width:14.7px;height:290px;background:#4d4d4d;border-left:1px solid #3e3e3e;box-sizing:border-box"></div>
<div style="left:694px;top:446px;width:29px;height:27px;background:#505050"></div>
<div style="left:723px;top:446px;width:195.5px;height:27px;background:#637a95"></div>
<div style="left:694px;top:473px;width:224.5px;height:1px;background:#3a3a3a"></div>
<div style="left:726.7px;top:448.8px;width:33px;height:20.4px;background:#fff;border:1px solid #1c1c1c;box-sizing:border-box"></div>
<div class="lb" style="left:772px;top:452.25px;height:15.5px;font-size:11.5px;line-height:15.5px;color:#f4f4f4;"><span style="transform:skewX(-14deg)">背景</span></div>
<div style="left:693px;top:733.5px;width:240.2px;height:18.5px;background:#4f4f4f;border-top:1px solid #3a3a3a;box-sizing:border-box"></div>
<svg class="ab" style="left:704.5px;top:368px" width="11" height="11" viewBox="0 0 11 11" ><circle cx="6.6" cy="4.4" r="3" fill="none" stroke="#bdbdbd" stroke-width="1.5"/><path d="M4.4 6.6L1 10" stroke="#bdbdbd" stroke-width="1.8" stroke-linecap="round"/></svg><svg class="ab" style="left:788.8px;top:367.6px" width="13.2" height="11.6" viewBox="0 0 13.2 11.6" ><rect x=".6" y=".6" width="12" height="10.4" fill="none" stroke="#bdbdbd" stroke-width="1.2"/><path d="M2.2 9.4L5.2 5.6L7 7.6L8.6 6.2L11 9.4Z" fill="#bdbdbd"/><circle cx="9.4" cy="3.6" r="1.1" fill="#bdbdbd"/></svg><svg class="ab" style="left:813px;top:367.4px" width="12" height="12" viewBox="0 0 12 12" ><circle cx="6" cy="6" r="5.4" fill="#bdbdbd"/><path d="M2.4 9.8L9.8 2.4A5.4 5.4 0 0 1 2.4 9.8Z" fill="#6a6a6a"/></svg><div style="left:836px;top:363.4px;width:16px;height:20px;font-family:'Liberation Serif',serif;font-weight:bold;font-size:15px;line-height:20px;text-align:center;color:#bdbdbd">T</div><svg class="ab" style="left:861px;top:366.4px" width="14" height="14" viewBox="0 0 14 14" ><rect x="2.6" y="2.6" width="8.8" height="8.8" fill="none" stroke="#bdbdbd" stroke-width="1.1"/><rect x="1" y="1" width="3" height="3" fill="#535353" stroke="#bdbdbd" stroke-width="1"/><rect x="1" y="10" width="3" height="3" fill="#535353" stroke="#bdbdbd" stroke-width="1"/><rect x="10" y="1" width="3" height="3" fill="#535353" stroke="#bdbdbd" stroke-width="1"/><rect x="10" y="10" width="3" height="3" fill="#535353" stroke="#bdbdbd" stroke-width="1"/></svg><svg class="ab" style="left:885.5px;top:366.6px" width="12.5" height="13.6" viewBox="0 0 12.5 13.6" ><path d="M3.4 .6H9L11.8 3.4V10.4H3.4Z" fill="none" stroke="#bdbdbd" stroke-width="1.1"/><path d="M8.6 .6V3.8H11.8" fill="none" stroke="#bdbdbd" stroke-width="1"/><rect x=".4" y="7" width="7.4" height="6.2" fill="#bdbdbd"/></svg><div style="left:920px;top:365.5px;width:8.5px;height:16.5px;background:linear-gradient(#8a8a8a 0,#6c6c6c 45%,#3e3e3e 46%,#484848 100%);border:1px solid #3a3a3a;box-sizing:border-box;border-radius:1px"></div><svg class="ab" style="left:736.5px;top:424.6px" width="11.4" height="11.1" viewBox="0 0 11.4 11.1" ><rect x="0.0" y="0.0" width="3.8" height="3.7" fill="#c8c8c8"/><rect x="0.0" y="3.7" width="3.8" height="3.7" fill="#7a7a7a"/><rect x="0.0" y="7.4" width="3.8" height="3.7" fill="#c8c8c8"/><rect x="3.8" y="0.0" width="3.8" height="3.7" fill="#7a7a7a"/><rect x="3.8" y="3.7" width="3.8" height="3.7" fill="#c8c8c8"/><rect x="3.8" y="7.4" width="3.8" height="3.7" fill="#7a7a7a"/><rect x="7.6" y="0.0" width="3.8" height="3.7" fill="#c8c8c8"/><rect x="7.6" y="3.7" width="3.8" height="3.7" fill="#7a7a7a"/><rect x="7.6" y="7.4" width="3.8" height="3.7" fill="#c8c8c8"/></svg><svg class="ab" style="left:757px;top:422.5px" width="17" height="14" viewBox="0 0 17 14" ><path d="M15.6 1.4L8 9.4" stroke="#bdbdbd" stroke-width="1.8" stroke-linecap="round"/><path d="M7.8 8.6Q9.4 9.6 9 11.2Q6.6 13.4 1 13Q4 11.8 4.8 9.8Q6 8 7.8 8.6Z" fill="#bdbdbd"/></svg><svg class="ab" style="left:780px;top:423.5px" width="13" height="13" viewBox="0 0 13 13" ><path d="M6.5 .4L8.8 3H7.3V5.7H10V4.2L12.6 6.5L10 8.8V7.3H7.3V10H8.8L6.5 12.6L4.2 10H5.7V7.3H3V8.8L.4 6.5L3 4.2V5.7H5.7V3H4.2Z" fill="#bdbdbd"/></svg><svg class="ab" style="left:803px;top:423.6px" width="10.5" height="12" viewBox="0 0 10.5 12" ><path d="M2.6 5.4V3.6Q2.6 .8 5.25 .8Q7.9 .8 7.9 3.6V5.4" fill="none" stroke="#bdbdbd" stroke-width="1.5"/><rect x=".2" y="5" width="10.1" height="6.8" fill="#bdbdbd"/><rect x="4.4" y="7" width="1.7" height="2.6" fill="#444"/></svg><svg class="ab" style="left:701.3px;top:454.1px" width="14" height="9" viewBox="0 0 14 9" ><path d="M.4 4.6Q7 -3 13.6 4.6Q7 11.6 .4 4.6Z" fill="#d8d8d8"/><circle cx="7" cy="4.4" r="2.7" fill="#3a3a3a"/><circle cx="6.2" cy="3.6" r=".9" fill="#e8e8e8"/></svg><svg class="ab" style="left:891px;top:453px" width="10.5" height="12" viewBox="0 0 10.5 12" ><path d="M2.6 5.4V3.6Q2.6 .8 5.25 .8Q7.9 .8 7.9 3.6V5.4" fill="none" stroke="#f0f0f0" stroke-width="1.5"/><rect x=".7" y="5.2" width="9.1" height="6.1" fill="none" stroke="#f0f0f0" stroke-width="1.3"/><rect x="4.4" y="7" width="1.7" height="2.6" fill="#f0f0f0"/></svg><svg class="ab" style="left:729px;top:738px" width="16" height="9.6" viewBox="0 0 16 9.6" ><rect x=".9" y="1.6" width="8.4" height="6.2" rx="3.1" fill="none" stroke="#c9c9c9" stroke-width="1.7"/><rect x="6.7" y="1.6" width="8.4" height="6.2" rx="3.1" fill="none" stroke="#c9c9c9" stroke-width="1.7"/></svg><div style="left:758px;top:733px;width:14px;height:18px;font-family:'Liberation Serif',serif;font-style:italic;font-weight:bold;font-size:14px;line-height:18px;color:#858585;letter-spacing:-.5px">fx</div><svg class="ab" style="left:784.5px;top:736.6px" width="13.5" height="12" viewBox="0 0 13.5 12" ><rect width="13.5" height="12" fill="#c9c9c9"/><circle cx="6.75" cy="6" r="2.9" fill="#4a4a4a"/></svg><svg class="ab" style="left:811.5px;top:736.6px" width="12.4" height="12.4" viewBox="0 0 12.4 12.4" ><circle cx="6.2" cy="6.2" r="5.4" fill="none" stroke="#c9c9c9" stroke-width="1.5"/><path d="M2.6 9.8L9.8 2.6A5.1 5.1 0 0 1 2.6 9.8Z" fill="#c9c9c9"/></svg><svg class="ab" style="left:825.5px;top:746.8px" width="4" height="2.4" viewBox="0 0 4 2.4" ><path d="M0 0H4L2.0 2.4Z" fill="#c9c9c9"/></svg><svg class="ab" style="left:839px;top:736.4px" width="12.6" height="11.6" viewBox="0 0 12.6 11.6" ><path d="M0 1.2Q0 0 1.2 0H4.6L6 1.8H11.6Q12.6 1.8 12.6 2.8V11.6H0Z" fill="#c9c9c9"/></svg><svg class="ab" style="left:866px;top:736.4px" width="11.5" height="12.6" viewBox="0 0 11.5 12.6" ><path d="M1.8 0H11.5V12.6H0V1.8Z" fill="#c9c9c9"/><path d="M0 2.8H5.6V8.4Z" fill="#333" transform="translate(0 3.2)"/><path d="M0 6H5V11Z" fill="#3a3a3a"/></svg><svg class="ab" style="left:893px;top:735.8px" width="12" height="13.4" viewBox="0 0 12 13.4" ><path d="M.4 2.8H11.6M4 2.6V.8H8V2.6" fill="none" stroke="#858585" stroke-width="1.2"/><path d="M1.6 4.2H10.4L9.6 12.8H2.4Z" fill="none" stroke="#858585" stroke-width="1.1"/><path d="M4.2 5.4V11.6M6 5.4V11.6M7.8 5.4V11.6" stroke="#858585" stroke-width="1"/></svg>
<div style="left:0px;top:751.5px;width:938px;height:1px;background:#2a2a2a"></div>
<div style="left:0px;top:752.5px;width:938px;height:2px;background:#4e4e4e"></div>
<div style="left:0px;top:754.5px;width:938px;height:1.5px;background:#111"></div>
<div style="left:40.7px;top:383.5px;width:138.2px;height:45px;background:#525252;border:1px solid #3a3a3a;border-left-color:#606060;border-top-color:#4a4a4a;box-sizing:border-box;box-shadow:1px 1px 2px rgba(0,0,0,.4)"></div>
<div style="left:41.7px;top:403.2px;width:136.2px;height:21.6px;background:#617b98"></div>
<div class="lb" style="left:84.5px;top:385.5px;height:16px;font-size:12px;line-height:16px;color:#f0f0f0;"><span>渐变工具</span></div>
<div class="lb" style="left:161px;top:386.0px;height:15px;font-size:11px;line-height:15px;color:#f0f0f0;transform:scaleX(.85);transform-origin:0 50%"><span style="">G</span></div>
<div class="lb" style="left:84.5px;top:404.3px;height:16px;font-size:12px;line-height:16px;color:#f8f8f8;"><span>油漆桶工具</span></div>
<div class="lb" style="left:161px;top:405.3px;height:15px;font-size:11px;line-height:15px;color:#f8f8f8;transform:scaleX(.85);transform-origin:0 50%"><span style="">G</span></div>
<div style="left:63px;top:388.5px;width:16px;height:11.5px;box-sizing:border-box;border:1.2px solid #f2f2f2;background:linear-gradient(100deg,#1a1a1a,#8a8a8a 55%,#f4f4f4)"></div><div style="left:49.2px;top:411.4px;width:3.6px;height:3.6px;background:#f4f4f4"></div><svg class="ab" style="left:62.5px;top:405.6px" width="15.48" height="17.2" viewBox="-1 0 18 20" ><g fill="#f0f0f0"><rect x="2.2" y="8.2" width="11.2" height="8.8" rx="2.2" transform="rotate(-33 7.8 12.6)"/><circle cx="15.6" cy="14.6" r="2"/></g><path d="M11.6 7.4Q15.4 8.4 15.8 13" fill="none" stroke="#f0f0f0" stroke-width="1.7"/><path d="M5.2 10.5V4.4Q5.2 1.1 7.4 1.1Q9.6 1.1 9.6 4.4V8.2" fill="none" stroke="#f0f0f0" stroke-width="1.5"/></svg><svg class="ab" style="left:52px;top:396px" width="130" height="38" viewBox="0 0 130 38" ><ellipse cx="64.9" cy="18.8" rx="58.6" ry="13.4" fill="none" stroke="#e2101a" stroke-width="2.9"/></svg><svg class="ab" style="left:150px;top:425px" width="70" height="95" viewBox="0 0 70 95" ><path d="M57.2 87L21 16.6" stroke="#df0f1c" stroke-width="3.5" stroke-linecap="round"/><path d="M16.6 7.8L17.4 21.6L25.4 17.4Z" fill="#df0f1c"/></svg>
</div></body></html>
